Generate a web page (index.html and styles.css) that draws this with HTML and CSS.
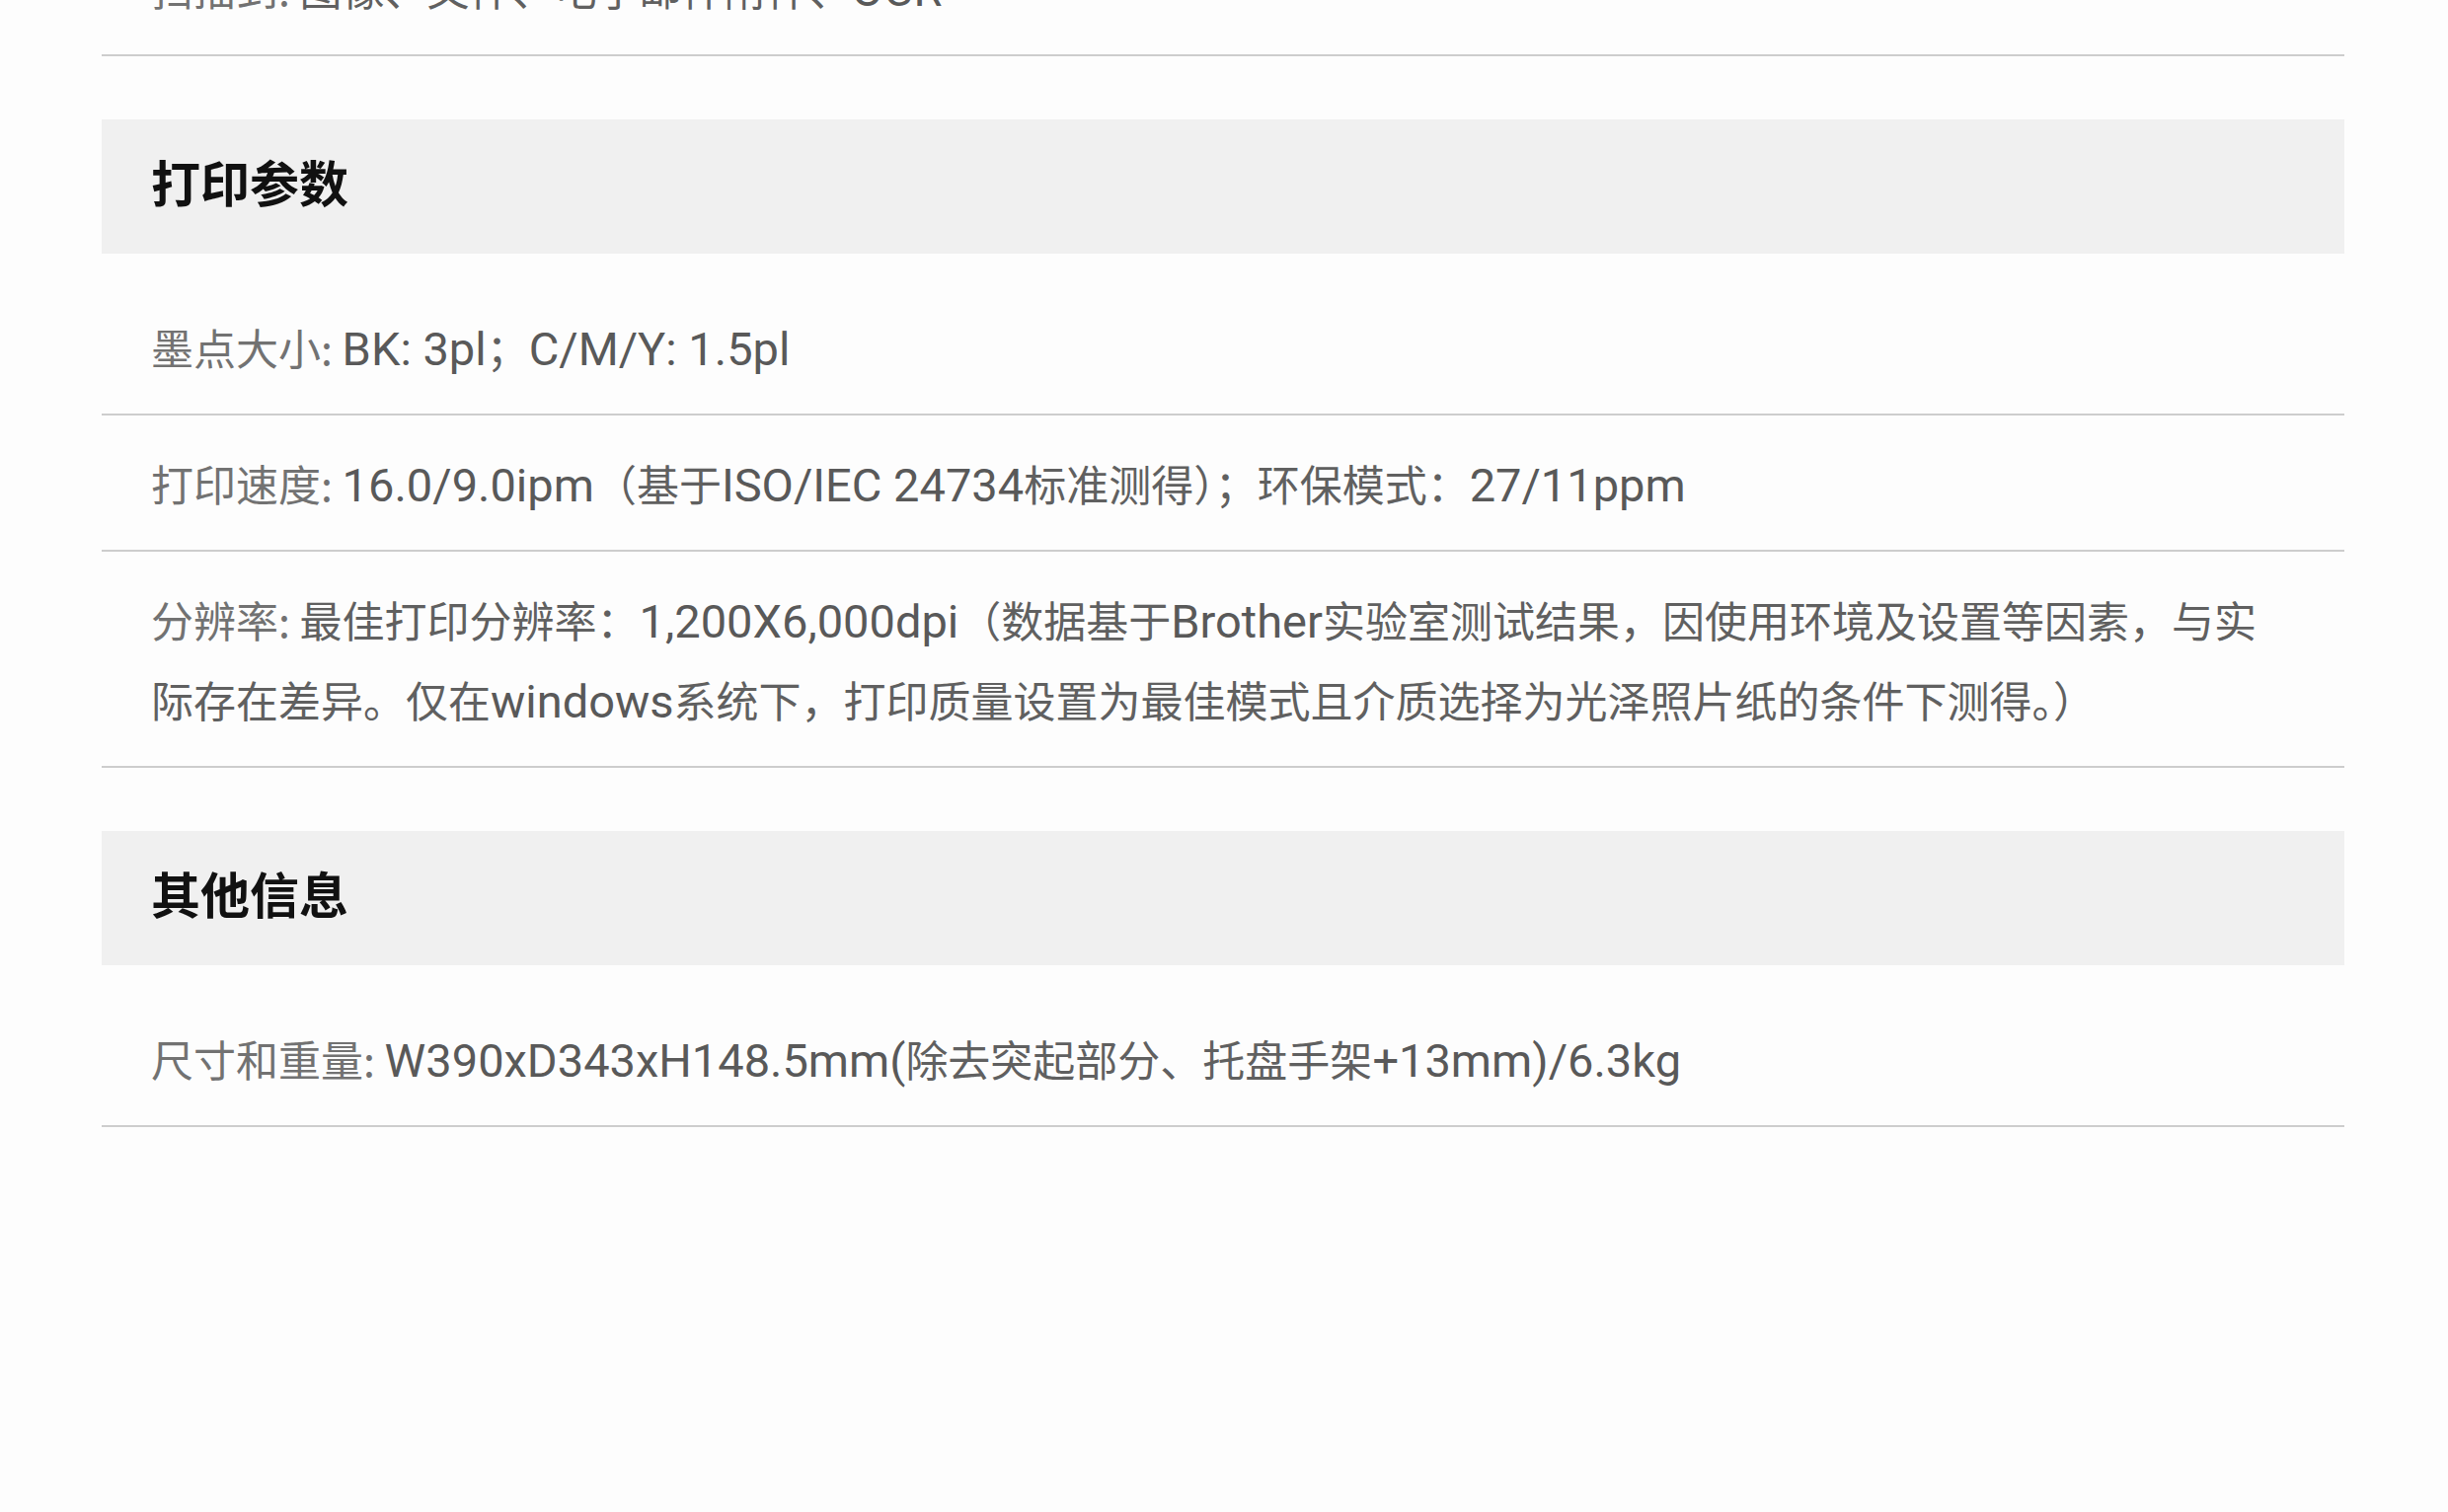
FILE: index.html
```html
<!DOCTYPE html>
<html lang="zh-CN">
<head>
  <meta charset="UTF-8" />
  <meta name="viewport" content="width=device-width, initial-scale=1.0"/>
  <title>产品参数</title>
  <link rel="stylesheet" href="styles.css">
</head>
<body>
  <div class="specs">
    <!-- 扫描参数 (scrolled past) -->
    <div class="section section-scrolled">
      <ul class="spec-list">
        <li class="spec-row"><span class="label">扫描到:</span> 图像、文件、电子邮件附件、<span class="en">OCR</span></li>
      </ul>
    </div>

    <!-- 打印参数 -->
    <div class="section">
      <h2 class="section-title">打印参数</h2>
      <ul class="spec-list">
        <li class="spec-row"><span class="label">墨点大小:</span> <span class="en">BK: 3pl</span>；<span class="en">C/M/Y: 1.5pl</span></li>
        <li class="spec-row"><span class="label">打印速度:</span> <span class="en">16.0/9.0ipm</span>（基于<span class="en">ISO/IEC 24734</span>标准测得）；环保模式：<span class="en">27/11ppm</span></li>
        <li class="spec-row"><span class="label">分辨率:</span> 最佳打印分辨率：<span class="en">1,200X6,000dpi</span>（数据基于<span class="en">Brother</span>实验室测试结果，因使用环境及设置等因素，与实际存在差异。仅在<span class="en">windows</span>系统下，打印质量设置为最佳模式且介质选择为光泽照片纸的条件下测得。）</li>
      </ul>
    </div>

    <!-- 其他信息 -->
    <div class="section">
      <h2 class="section-title">其他信息</h2>
      <ul class="spec-list">
        <li class="spec-row"><span class="label">尺寸和重量:</span> <span class="en">W390xD343xH148.5mm(</span>除去突起部分、托盘手架<span class="en">+13mm)/6.3kg</span></li>
      </ul>
    </div>
  </div>
</body>
</html>
```

FILE: styles.css
```css
body {
  font-family: "Noto Sans CJK SC", sans-serif;
  background-color: #fdfdfd;
  margin: 0;
  padding: 0;
}

.specs {
  padding: 0 105px 0 103px;
}

.section {
  margin-top: 64px;
}

/* page is scrolled: only the tail of the scan section shows */
.section-scrolled {
  margin-top: -81px;
}

.section-title {
  margin: 0;
  height: 136px;
  box-sizing: border-box;
  display: flex;
  align-items: center;
  padding: 0 50px 12px;
  background-color: #f0f0f0;
  color: #111;
  font-size: 50px;
  font-weight: bold;
}

.spec-list {
  list-style: none;
  margin: 0;
  padding: 26px 0 0;
}

.section-scrolled .spec-list {
  padding-top: 0;
}

.spec-row {
  padding: 27.5px 60px 27.5px 50px;
  border-bottom: 2px solid #cdcdcd;
  font-size: 43px;
  line-height: 81px;
  color: #606060;
}

.label {
  color: #727272;
}

/* latin runs are set taller than the ideographs */
.en {
  font-family: Roboto, "Noto Sans", sans-serif;
  font-size: 47px;
  line-height: 1;
  color: #595959;
}
```
